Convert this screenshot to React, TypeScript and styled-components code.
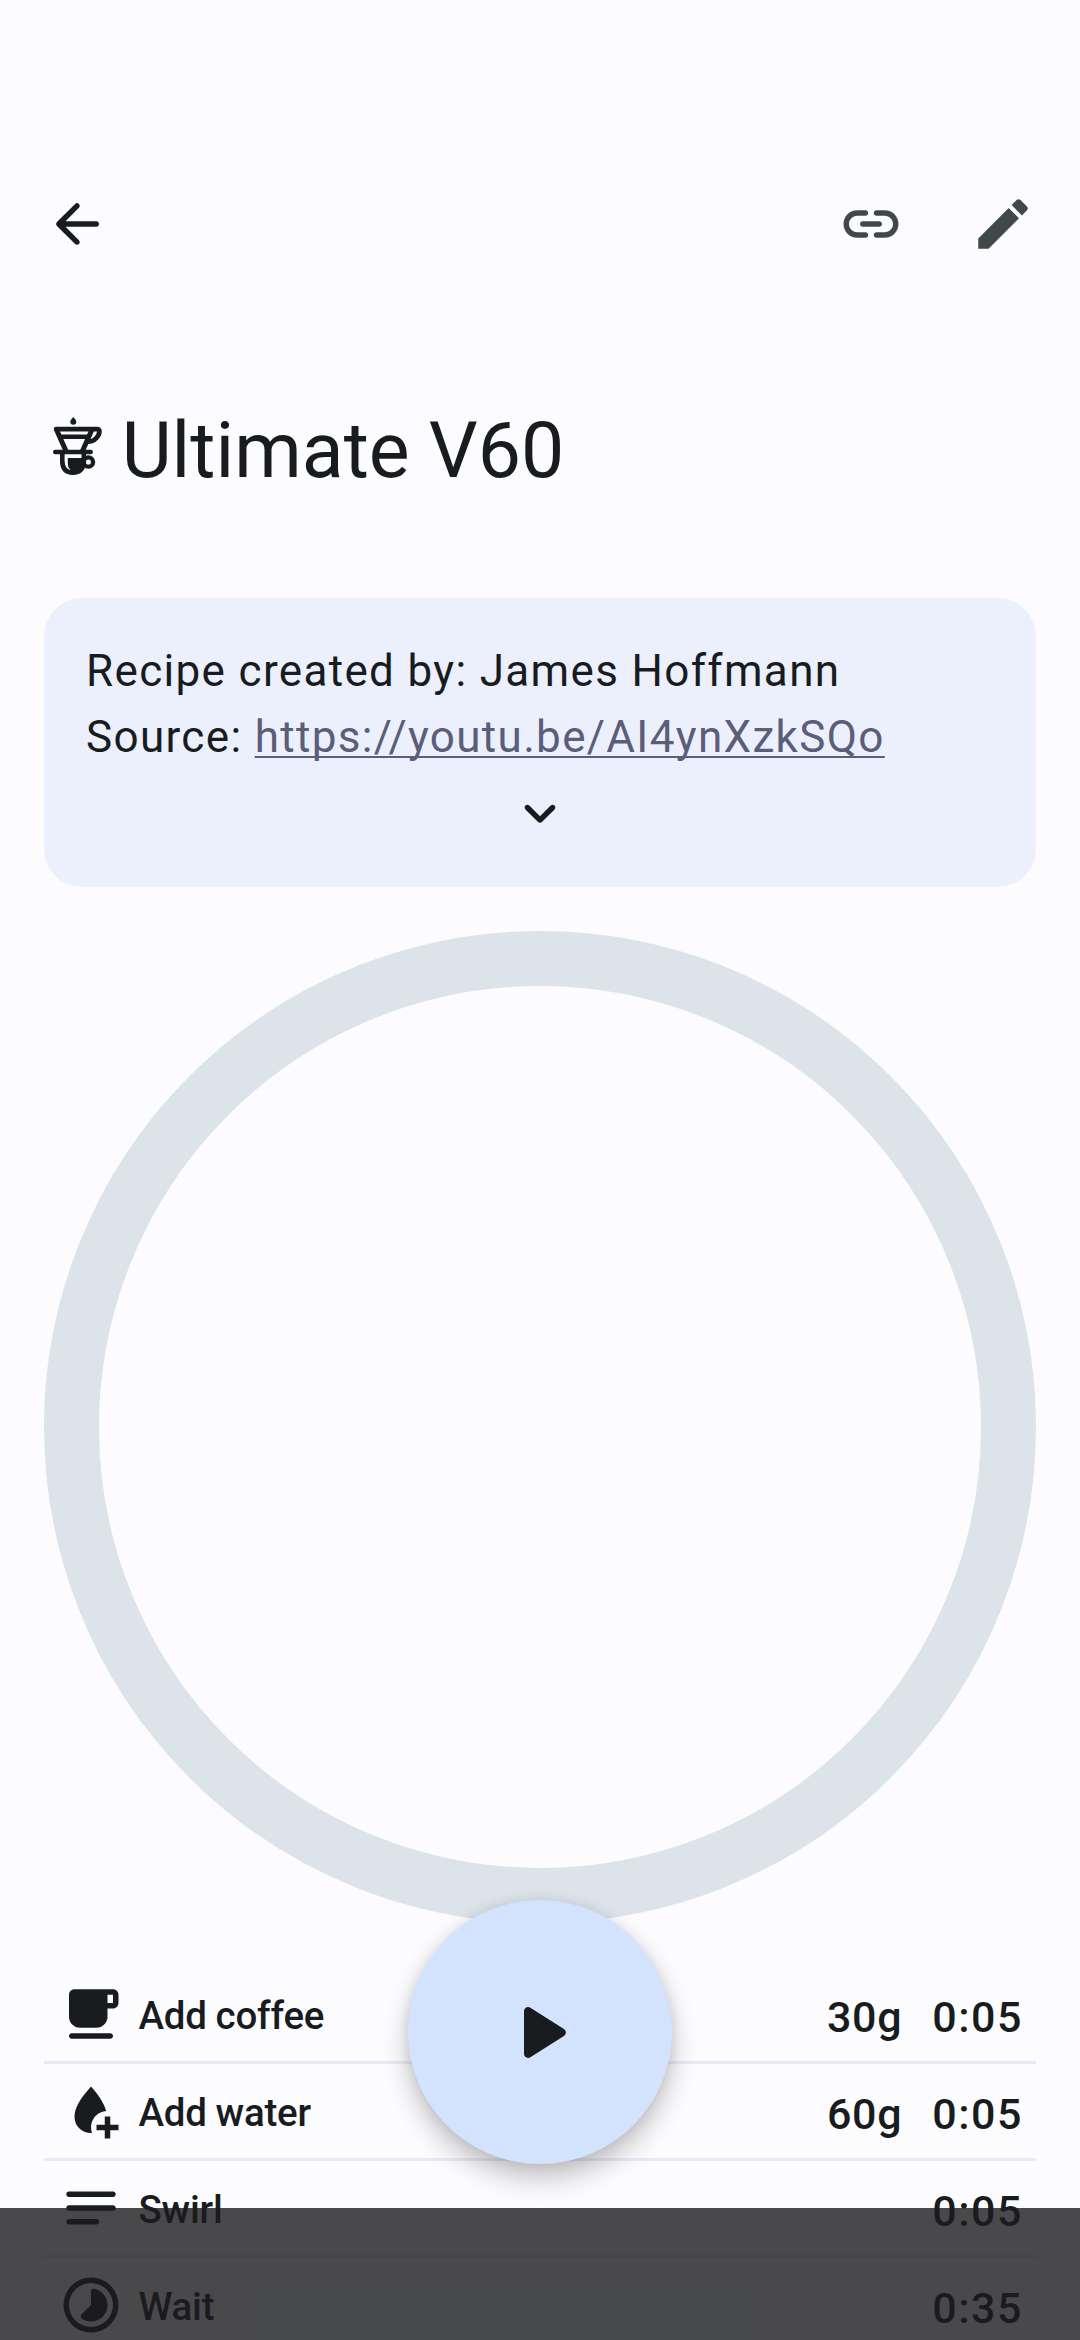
import React from "react";
import styled, { createGlobalStyle } from "styled-components";

const ink = "#191c1e";

const GlobalStyle = createGlobalStyle`
  *, *::before, *::after { box-sizing: border-box; }
  html, body { margin: 0; padding: 0; background: #fcfcff; overflow: hidden; }
`;

const Screen = styled.main`
  position: relative;
  display: flex;
  flex-direction: column;
  width: 1080px;
  height: 2340px;
  overflow: hidden;
  padding: 191px 44px 0;
  background: #fcfcff;
  color: ${ink};
  font-family: Roboto, "Noto Sans", sans-serif;
`;

const Toolbar = styled.header`
  display: flex;
  justify-content: space-between;
  height: 66px;
  flex: none;
`;

const Actions = styled.div`
  display: flex;
  gap: 66px;
  color: #40484c;
`;

const IconButton = styled.button`
  display: flex;
  padding: 0;
  border: 0;
  background: none;
  color: inherit;
`;

const Glyph = styled.svg<{ $size?: number }>`
  display: block;
  flex: none;
  width: ${(p) => p.$size ?? 66}px;
  height: ${(p) => p.$size ?? 66}px;
  fill: currentColor;
`;

const TitleRow = styled.div`
  display: flex;
  align-items: center;
  flex: none;
  height: 100px;
  margin-top: 144px;
`;

const TitleIcon = styled.svg`
  display: block;
  flex: none;
  width: 56px;
  height: 68px;
  margin: 0 15.7px 10px 6px;
`;

const Title = styled.h1`
  margin: 0;
  font-size: 77px;
  line-height: 100px;
  font-weight: 400;
  white-space: nowrap;
`;

const InfoCard = styled.section`
  display: flex;
  flex-direction: column;
  flex: none;
  height: 289px;
  margin-top: 97px;
  padding: 40px 42px 0;
  border-radius: 38px;
  background: #ecf0fd;
`;

const InfoText = styled.p`
  margin: 0;
  font-size: 44px;
  line-height: 66px;
  letter-spacing: 1.34px;
  white-space: nowrap;
`;

const SourceLink = styled.a`
  color: #5b5d7a;
  text-decoration: underline;
  text-decoration-skip-ink: none;
  text-decoration-thickness: 2.2px;
  text-underline-offset: 4px;
`;

const Expander = styled(IconButton)`
  align-self: center;
  margin-top: 10px;
`;

const ProgressRing = styled.div`
  flex: none;
  width: 992px;
  height: 992px;
  margin-top: 44px;
  border: 55px solid #dce4e9;
  border-radius: 50%;
`;

const Steps = styled.ul`
  display: flex;
  flex-direction: column;
  flex: none;
  margin: 44px 0 0;
  padding: 0;
  list-style: none;
`;

const Step = styled.li`
  display: flex;
  align-items: center;
  height: 97px;
  padding: 0 13px 0 14px;
  border-bottom: 3px solid #e7eaf6;
  font-weight: 500;
`;

const StepName = styled.span`
  flex: 1;
  margin-left: 14.5px;
  padding-top: 2px;
  font-size: 38.5px;
  line-height: 55px;
  letter-spacing: -0.22px;
  word-spacing: -0.5px;
`;

const StepValue = styled.span<{ $spacing: number }>`
  margin-left: 30px;
  padding-top: 5px;
  font-size: 43px;
  line-height: 66px;
  letter-spacing: ${(p) => p.$spacing}px;
`;

const PlayButton = styled.button`
  position: absolute;
  left: 408px;
  top: 1900px;
  display: flex;
  align-items: center;
  justify-content: center;
  width: 264px;
  height: 264px;
  padding: 0;
  border: 0;
  border-radius: 50%;
  background: #d3e3fe;
  color: ${ink};
  box-shadow: 0 14px 27px rgba(0, 0, 0, 0.24), 0 0 12px rgba(0, 0, 0, 0.08);
`;

const NavigationScrim = styled.div`
  position: absolute;
  left: 0;
  right: 0;
  bottom: 0;
  height: 132px;
  background: rgba(27, 28, 31, 0.8);
`;

const paths = {
  back: "M19 11H7.83l4.88-4.88c.39-.39.39-1.03 0-1.42-.39-.39-1.02-.39-1.41 0l-6.59 6.59c-.39.39-.39 1.02 0 1.41l6.59 6.59c.39.39 1.02.39 1.41 0 .39-.39.39-1.02 0-1.41L7.83 13H19c.55 0 1-.45 1-1s-.45-1-1-1z",
  link: "M17 7h-3c-.55 0-1 .45-1 1s.45 1 1 1h3c1.65 0 3 1.35 3 3s-1.35 3-3 3h-3c-.55 0-1 .45-1 1s.45 1 1 1h3c2.76 0 5-2.24 5-5s-2.24-5-5-5zm-9 5c0 .55.45 1 1 1h6c.55 0 1-.45 1-1s-.45-1-1-1H9c-.55 0-1 .45-1 1zm2 3H7c-1.65 0-3-1.35-3-3s1.35-3 3-3h3c.55 0 1-.45 1-1s-.45-1-1-1H7c-2.76 0-5 2.24-5 5s2.24 5 5 5h3c.55 0 1-.45 1-1s-.45-1-1-1z",
  edit: "M3 17.25V21h3.75L17.81 9.94l-3.75-3.75L3 17.25zM20.71 7.04c.39-.39.39-1.02 0-1.41l-2.34-2.34c-.39-.39-1.02-.39-1.41 0l-1.83 1.83 3.75 3.75 1.83-1.83z",
  expand: "M8.12 9.29L12 13.17l3.88-3.88c.39-.39 1.02-.39 1.41 0 .39.39.39 1.02 0 1.41l-4.59 4.59c-.39.39-1.02.39-1.41 0L6.7 10.7c-.39-.39-.39-1.02 0-1.41.39-.38 1.03-.39 1.42 0z",
  play: "M8 6.82v10.36c0 .79.87 1.27 1.54.84l8.14-5.18c.62-.39.62-1.29 0-1.69L9.54 5.98C8.87 5.55 8 6.03 8 6.82z",
  coffee: "M20 3H6c-1.1 0-2 .9-2 2v8c0 2.21 1.79 4 4 4h6c2.21 0 4-1.79 4-4v-3h2c1.11 0 2-.9 2-2V5c0-1.11-.89-2-2-2zm0 5h-2V5h2v3zM5 19h14c.55 0 1 .45 1 1s-.45 1-1 1H5c-.55 0-1-.45-1-1s.45-1 1-1z",
  water: "M12 3.1C9.7 5.7 6 10 6 14c0 3.5 2.6 6 6 6h.34A6 6 0 0 1 17.5 12C16.6 8.7 14.3 5.7 12 3.1zM17 14h2v3h3v2h-3v3h-2v-3h-3v-2h3z",
  swirl: "M20 11H4c-.55 0-1 .45-1 1s.45 1 1 1h16c.55 0 1-.45 1-1s-.45-1-1-1zM4 18h10c.55 0 1-.45 1-1s-.45-1-1-1H4c-.55 0-1 .45-1 1s.45 1 1 1zM20 6H4c-.55 0-1 .45-1 1s.45 1 1 1h16c.55 0 1-.45 1-1s-.45-1-1-1z",
  wait: "M12 2a10 10 0 1 0 0 20 10 10 0 0 0 0-20zm0 18a8 8 0 1 1 0-16 8 8 0 0 1 0 16zM13.1 6.11A1 1 0 0 0 12 7.1V12l-3.4 3.4a1 1 0 0 0 .1 1.6A6 6 0 1 0 13.1 6.11z",
};

const Icon = ({ name, size }: { name: keyof typeof paths; size?: number }) => (
  <Glyph viewBox="0 0 24 24" $size={size} aria-hidden="true">
    <path d={paths[name]} fillRule="evenodd" />
  </Glyph>
);

const DripperIcon = () => (
  <TitleIcon viewBox="0 0 56 68" fill="none" stroke={ink} strokeLinecap="round" strokeLinejoin="round" aria-hidden="true">
    <path d="M23.300 5c2 2.400 3 3.500 3 4.800a3 3 0 0 1-6 0c0-1.300 1-2.400 3-4.800z" fill={ink} stroke="none" />
    <path d="M6.400 17.100H47C50 17.100 49.800 20 48.500 23 46.500 27 43.500 29.600 38 29.600" strokeWidth="4.900" />
    <path d="M6.400 17.500L16 39M42 17.500L32.500 39" strokeWidth="5" />
    <path d="M10 24.700H38" strokeWidth="4.600" />
    <path d="M5.200 40H40.700" strokeWidth="4.500" />
    <path d="M12.300 41V49C12.300 56.500 16 60.600 23 60.600S33.800 56 33.800 50V41" strokeWidth="4.600" />
    <path d="M17.800 46H34V58L26 60C20.500 59.500 17.800 56 17.800 51z" fill={ink} stroke="none" />
    <circle cx="38.400" cy="50" r="4.700" strokeWidth="4.300" />
  </TitleIcon>
);

const steps: { icon: keyof typeof paths; name: string; weight?: string; time: string }[] = [
  { icon: "coffee", name: "Add coffee", weight: "30g", time: "0:05" },
  { icon: "water", name: "Add water", weight: "60g", time: "0:05" },
  { icon: "swirl", name: "Swirl", time: "0:05" },
  { icon: "wait", name: "Wait", time: "0:35" },
];

export default function App() {
  return (
    <>
      <GlobalStyle />
      <Screen>
        <Toolbar>
          <IconButton aria-label="Back"><Icon name="back" /></IconButton>
          <Actions>
            <IconButton aria-label="Link"><Icon name="link" /></IconButton>
            <IconButton aria-label="Edit"><Icon name="edit" /></IconButton>
          </Actions>
        </Toolbar>
        <TitleRow>
          <DripperIcon />
          <Title>Ultimate V60</Title>
        </TitleRow>
        <InfoCard>
          <InfoText>Recipe created by: James Hoffmann</InfoText>
          <InfoText>
            Source: <SourceLink>https://youtu.be/AI4ynXzkSQo</SourceLink>
          </InfoText>
          <Expander aria-label="Expand"><Icon name="expand" /></Expander>
        </InfoCard>
        <ProgressRing />
        <Steps>
          {steps.map((step) => (
            <Step key={step.name}>
              <Icon name={step.icon} />
              <StepName>{step.name}</StepName>
              {step.weight && <StepValue $spacing={0.6}>{step.weight}</StepValue>}
              <StepValue $spacing={1.55}>{step.time}</StepValue>
            </Step>
          ))}
        </Steps>
        <PlayButton aria-label="Start"><Icon name="play" size={99} /></PlayButton>
        <NavigationScrim />
      </Screen>
    </>
  );
}
